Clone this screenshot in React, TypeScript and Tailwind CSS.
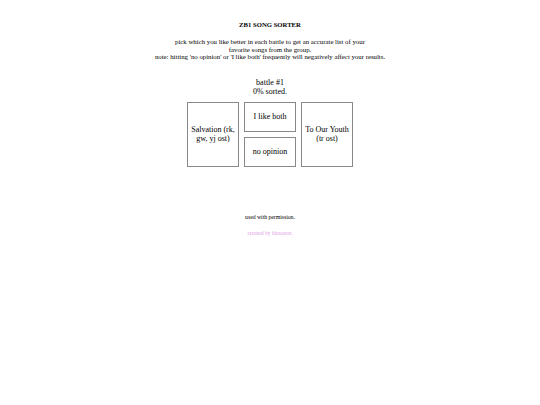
export default function App() {
  return (
    <div className="w-[540px] h-[405px] bg-white text-black flex flex-col items-center" style={{ fontFamily: '"Liberation Serif", "Times New Roman", serif' }}>
      <h1 className="mt-[21px] text-[6.7px] leading-[8px] font-bold">ZB1 SONG SORTER</h1>
      <p className="mt-[9px] text-[6.8px] leading-[7.6px] text-center">
        pick which you like better in each battle to get an accurate list of your
        <br />
        favorite songs from the group.
        <br />
        note: hitting 'no opinion' or 'I like both' frequently will negatively affect your results.
      </p>
      <div className="mt-[17px] text-[8px] leading-[9px] text-center">
        battle #1
        <br />
        0% sorted.
      </div>
      <div className="mt-[6px] flex gap-[5px] text-[8px] leading-[9.5px] text-center">
        <div className="w-[52px] h-[65px] border border-[#888] flex items-center justify-center px-[2px]">
          Salvation (rk, gw, yj ost)
        </div>
        <div className="flex flex-col gap-[5px]">
          <div className="w-[52px] h-[30px] border border-[#888] flex items-center justify-center">I like both</div>
          <div className="w-[52px] h-[30px] border border-[#888] flex items-center justify-center">no opinion</div>
        </div>
        <div className="w-[52px] h-[65px] border border-[#888] flex items-center justify-center px-[2px]">
          To Our Youth (tr ost)
        </div>
      </div>
      <div className="mt-[47px] text-[5.7px] leading-[6px]">used with permission.</div>
      <div className="mt-[10px] text-[5.6px] leading-[6px] text-[#e0a0e0]">created by biasorter.</div>
    </div>
  );
}
